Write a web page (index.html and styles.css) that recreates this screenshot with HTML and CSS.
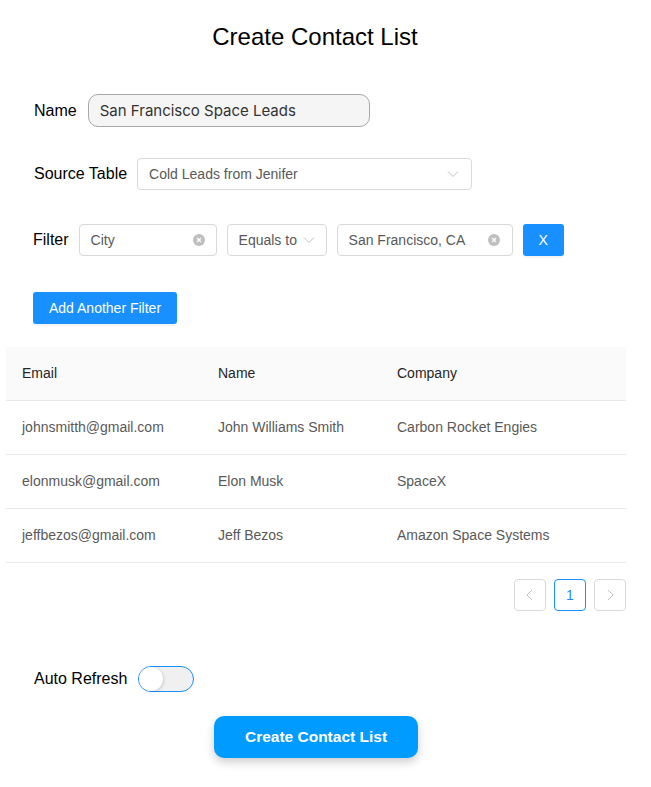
FILE: index.html
```html
<!DOCTYPE html>
<html lang="en">
<head>
    <meta charset="UTF-8">
    <meta name="viewport" content="width=device-width, initial-scale=1.0">
    <title>Create Contact List</title>
    <link rel="stylesheet" href="styles.css">
</head>
<body>
<div class="container">
    <h1>Create Contact List</h1>

    <div class="row name-row">
        <label>Name</label>
        <input class="name-input" type="text" value="San Francisco Space Leads">
    </div>

    <div class="row source-row">
        <label>Source Table</label>
        <div class="select source-select">
            <span>Cold Leads from Jenifer</span>
            <svg class="arrow" width="12" height="12" viewBox="0 0 12 12"><path d="M1 3.5 L6 8.5 L11 3.5" fill="none" stroke="#bfbfbf" stroke-width="1"/></svg>
        </div>
    </div>

    <div class="row filter-row">
        <label class="filter-label">Filter</label>
        <div class="select city">
            <span>City</span>
            <svg class="clear" width="12" height="12" viewBox="0 0 12 12"><circle cx="6" cy="6" r="6" fill="#bfbfbf"/><path d="M4 4 L8 8 M8 4 L4 8" stroke="#fff" stroke-width="1.2"/></svg>
        </div>
        <div class="select op">
            <span>Equals to</span>
            <svg class="arrow" width="12" height="12" viewBox="0 0 12 12"><path d="M1 3.5 L6 8.5 L11 3.5" fill="none" stroke="#bfbfbf" stroke-width="1"/></svg>
        </div>
        <div class="select value">
            <span>San Francisco, CA</span>
            <svg class="clear" width="12" height="12" viewBox="0 0 12 12"><circle cx="6" cy="6" r="6" fill="#bfbfbf"/><path d="M4 4 L8 8 M8 4 L4 8" stroke="#fff" stroke-width="1.2"/></svg>
        </div>
        <button class="btn btn-x">X</button>
    </div>

    <div class="row add-row">
        <button class="btn">Add Another Filter</button>
    </div>

    <table class="contacts">
        <thead>
            <tr><th class="c-email">Email</th><th class="c-name">Name</th><th>Company</th></tr>
        </thead>
        <tbody>
            <tr><td>johnsmitth@gmail.com</td><td>John Williams Smith</td><td>Carbon Rocket Engies</td></tr>
            <tr><td>elonmusk@gmail.com</td><td>Elon Musk</td><td>SpaceX</td></tr>
            <tr><td>jeffbezos@gmail.com</td><td>Jeff Bezos</td><td>Amazon Space Systems</td></tr>
        </tbody>
    </table>

    <div class="pagination">
        <div class="page disabled">
            <svg width="12" height="12" viewBox="0 0 12 12"><path d="M8 1 L3 6 L8 11" fill="none" stroke="#bfbfbf" stroke-width="1"/></svg>
        </div>
        <div class="page active">1</div>
        <div class="page disabled">
            <svg width="12" height="12" viewBox="0 0 12 12"><path d="M4 1 L9 6 L4 11" fill="none" stroke="#bfbfbf" stroke-width="1"/></svg>
        </div>
    </div>

    <div class="row refresh-row">
        <label>Auto Refresh</label>
        <div class="switch"><span class="knob"></span></div>
    </div>

    <div class="submit-row">
        <button class="btn-create">Create Contact List</button>
    </div>
</div>
</body>
</html>
```

FILE: styles.css
```css
body {
    font-family: "Liberation Sans", Arial, sans-serif;
    margin: 0;
    background: #fff;
    color: #000;
}
.container {
    width: 620px;
    margin-left: 6px;
    padding-bottom: 29px;
}
h1 {
    margin: 0;
    padding-top: 20px;
    padding-right: 2px;
    font-size: 24px;
    font-weight: normal;
    line-height: 34px;
    text-align: center;
}
.row {
    display: flex;
    align-items: center;
    padding-left: 28px;
}
.row label {
    font-size: 16px;
    margin-right: 11px;
}
.name-row { margin-top: 40px; }
.name-input {
    width: 282px;
    height: 33px;
    box-sizing: border-box;
    border: 1px solid #a8a8a8;
    border-radius: 10px;
    background: #f5f5f5;
    padding: 0 11px;
    font-family: Inter, sans-serif;
    font-size: 15px;
    color: #333;
}
.source-row { margin-top: 31px; }
.source-row label { margin-right: 10px; }
.select {
    display: flex;
    align-items: center;
    justify-content: space-between;
    box-sizing: border-box;
    height: 32px;
    padding: 0 11px;
    border: 1px solid #d9d9d9;
    border-radius: 4px;
    font-size: 14px;
    color: #595959;
    background: #fff;
}
.source-select { width: 335px; padding-right: 12px; }
.filter-row { margin-top: 34px; padding-left: 27px; }
.filter-row .filter-label { margin-right: 10px; }
.filter-row .select { margin-right: 10px; }
.city { width: 138px; padding-right: 11px; }
.op { width: 100px; padding-right: 11px; }
.value { width: 176px; padding-right: 12px; }
.btn {
    height: 32px;
    padding: 0 16px;
    border: none;
    border-radius: 3px;
    background: #1890ff;
    color: #fff;
    font-family: "Liberation Sans", Arial, sans-serif;
    font-size: 14px;
    box-shadow: 0 2px 0 rgba(0, 0, 0, 0.045);
}
.btn-x { width: 41px; padding: 0; }
.add-row { margin-top: 36px; padding-left: 27px; }
.contacts {
    margin-top: 23px;
    width: 620px;
    border-collapse: collapse;
    font-size: 14px;
    text-align: left;
}
.contacts th, .contacts td {
    height: 52px;
    padding: 0 16px 1px;
    border-bottom: 1px solid #e8e8e8;
    box-sizing: content-box;
}
.contacts th {
    background: #fafafa;
    font-weight: normal;
    color: #262626;
}
.contacts td { color: #595959; }
.c-email { width: 164px; }
.c-name { width: 147px; }
.pagination {
    display: flex;
    justify-content: flex-end;
    gap: 8px;
    margin-top: 16px;
}
.page {
    width: 32px;
    height: 32px;
    box-sizing: border-box;
    border: 1px solid #d9d9d9;
    border-radius: 4px;
    display: flex;
    align-items: center;
    justify-content: center;
    font-size: 14px;
}
.page.active {
    border-color: #1890ff;
    color: #1890ff;
}
.refresh-row { margin-top: 55px; }
.switch {
    position: relative;
    width: 56px;
    height: 26px;
    box-sizing: border-box;
    border: 1px solid #1890ff;
    border-radius: 13px;
    background: #f0f0f0;
}
.knob {
    position: absolute;
    left: 0;
    top: 0;
    width: 24px;
    height: 24px;
    border-radius: 50%;
    background: #fff;
    box-shadow: 1px 1px 3px rgba(0, 0, 0, 0.15);
}
.submit-row {
    display: flex;
    justify-content: center;
    margin-top: 24px;
}
.btn-create {
    width: 204px;
    height: 42px;
    border: none;
    border-radius: 10px;
    background: #009bff;
    color: #fff;
    font-family: "Liberation Sans", Arial, sans-serif;
    font-size: 15.5px;
    font-weight: bold;
    box-shadow: 0 4px 10px rgba(0, 0, 0, 0.2);
}
```
